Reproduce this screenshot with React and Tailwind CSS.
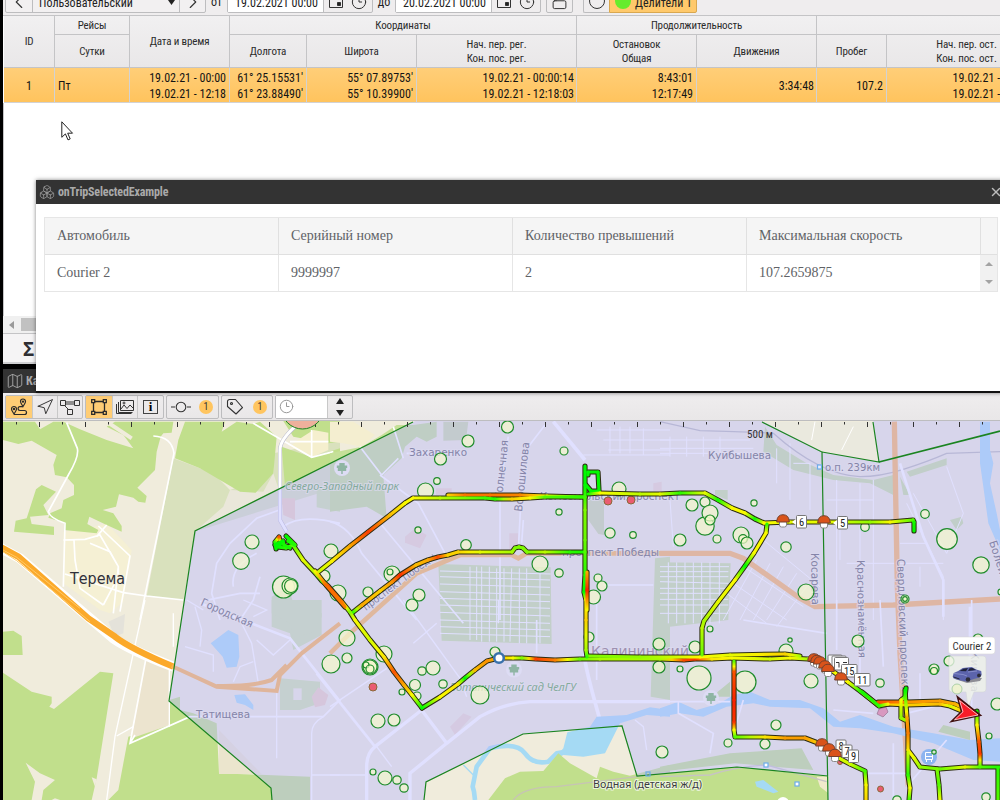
import React from "react";
import { ChevronLeft, ChevronRight, Clock3, Navigation, Map as MapIcon, Boxes, X, LockOpen } from "lucide-react";

function HeadCell({ className = "", children }) {
  return (
    <div className={`flex flex-col items-center justify-center border-b border-r border-[#c4c4c6] pt-[1px] text-center leading-[14px] ${className}`}>
      {children}
    </div>
  );
}

function Cell({ className = "items-end pr-[3px]", lines }) {
  return (
    <div className={`flex flex-col justify-center border-b border-r border-[#d2d2d4] pt-[2px] text-[12px] leading-[16px] text-[#141414] ${className}`}>
      {lines.map((l) => <div key={l} className="whitespace-nowrap">{l}</div>)}
    </div>
  );
}

function CalendarIcon() {
  return (
    <svg width="14" height="14" viewBox="0 0 14 14" fill="none" stroke="#333"><path d="M.5 0v13.5h13V0" /><path d="M8.500 8.500h3v3h-3z" fill="#222" /></svg>
  );
}

function DateField({ value }) {
  return (
    <div className="flex h-[22px] shrink-0 rounded-[2px] border border-[#bdbdbf]">
      <div className="w-[95px] bg-white pl-[7px] text-[12px] leading-[22px] text-[#222]"><span className="whitespace-nowrap">{value}</span></div>
      <div className="flex w-[49px] items-start justify-between border-l border-[#bdbdbf] px-[5px] pt-[2px]">
        <CalendarIcon />
        <Clock3 size={16} strokeWidth={1.500} color="#333" />
      </div>
    </div>
  );
}

function TopBar() {
  return (
    <div className="flex h-[16px] shrink-0 items-end border-b border-[#c4c4c6] bg-[#efedee] pb-[2px] pl-[2px] text-[13px] text-[#222]">
      <div className="flex h-[22px] w-[201px] shrink-0 rounded-[2px] border border-[#bdbdbf] bg-[#f2f0f1]">
        <div className="flex w-[27px] items-center justify-center border-r border-[#bdbdbf]"><ChevronLeft size={22} strokeWidth={1.200} color="#333" /></div>
        <div className="flex flex-1 justify-between pl-[6px] pr-[4px]">
          <span className="text-[12px] leading-[22px]">Пользовательский</span>
          <svg className="mt-[8px]" width="7" height="5"><path d="M0 0h7l-3.500 5z" fill="#222" /></svg>
        </div>
        <div className="flex w-[26px] items-center justify-center border-l border-[#bdbdbf]"><ChevronRight size={22} strokeWidth={1.200} color="#333" /></div>
      </div>
      <div className="flex h-[22px] w-[21px] shrink-0 justify-center text-[12px] leading-[22px]">от</div>
      <DateField value="19.02.2021 00:00" />
      <div className="flex h-[22px] w-[22px] shrink-0 justify-center text-[12px] leading-[22px]">до</div>
      <DateField value="20.02.2021 00:00" />
      <div className="ml-[5px] flex h-[22px] w-[27px] shrink-0 items-end justify-center rounded-[2px] border border-[#bdbdbf] pb-[2px]"><LockOpen size={17} strokeWidth={1.400} color="#333" /></div>
      <div className="ml-[10px] flex h-[22px] w-[26px] shrink-0 justify-center rounded-l-[2px] border border-r-0 border-[#bdbdbf]"><div className="mt-[1px] h-[16px] w-[16px] rounded-full border border-[#333]" /></div>
      <div className="flex h-[22px] w-[88px] shrink-0 rounded-r-[2px] border border-[#d9a850] bg-[#ffc96b] pl-[5px]">
        <div className="mt-[1px] h-[16px] w-[16px] shrink-0 rounded-full bg-[#66ec2c]" />
        <span className="ml-[4px] whitespace-nowrap text-[12px] leading-[22px]">Делители 1</span>
      </div>
    </div>
  );
}

function TripTable() {
  return (
    <div className="w-[1043px] shrink-0 pl-[1px] text-[#2b2b2b]">
      <div className="grid grid-cols-[51px_75px_100px_77px_110px_160px_120px_120px_70px_160px] grid-rows-[19px_33px] bg-gradient-to-b from-[#f1f0f1] to-[#e9e7e8] text-[11px] tracking-[-0.15px]">
        <HeadCell className="row-span-2">ID</HeadCell>
        <HeadCell>Рейсы</HeadCell>
        <HeadCell className="row-span-2">Дата и время</HeadCell>
        <HeadCell className="col-span-3">Координаты</HeadCell>
        <HeadCell className="col-span-2">Продолжительность</HeadCell>
        <HeadCell className="col-span-2" />
        <HeadCell>Сутки</HeadCell>
        <HeadCell>Долгота</HeadCell>
        <HeadCell>Широта</HeadCell>
        <HeadCell><div>Нач. пер. рег.</div><div>Кон. пос. рег.</div></HeadCell>
        <HeadCell><div>Остановок</div><div>Общая</div></HeadCell>
        <HeadCell>Движения</HeadCell>
        <HeadCell>Пробег</HeadCell>
        <HeadCell><div>Нач. пер. ост.</div><div>Кон. пос. ост.</div></HeadCell>
      </div>
      <div className="grid h-[35px] grid-cols-[51px_75px_100px_77px_110px_160px_120px_120px_70px_160px] bg-gradient-to-b from-[#ffce78] to-[#ffc35c]">
        <Cell className="items-center" lines={["1"]} />
        <Cell className="items-start pl-[3px]" lines={["Пт"]} />
        <Cell lines={["19.02.21 - 00:00", "19.02.21 - 12:18"]} />
        <Cell lines={["61° 25.15531'", "61° 23.88490'"]} />
        <Cell lines={["55° 07.89753'", "55° 10.39900'"]} />
        <Cell className="items-end pr-[2px]" lines={["19.02.21 - 00:00:14", "19.02.21 - 12:18:03"]} />
        <Cell lines={["8:43:01", "12:17:49"]} />
        <Cell className="items-end pr-[2px]" lines={["3:34:48"]} />
        <Cell lines={["107.2"]} />
        <Cell className="items-end pr-[2px]" lines={["19.02.21 - 00:09:27", "19.02.21 - 12:18:03"]} />
      </div>
    </div>
  );
}

function Popup() {
  const cols = ["Автомобиль", "Серийный номер", "Количество превышений", "Максимальная скорость"];
  const vals = ["Courier 2", "9999997", "2", "107.2659875"];
  return (
    <div className="absolute left-[36px] top-[180px] flex h-[213px] w-[980px] flex-col border-b-2 border-[#111] bg-white shadow-[0_0_4px_rgba(0,0,0,0.5)]">
      <div className="flex h-[24px] shrink-0 items-center bg-[#333] pl-[3px] text-[12px] font-bold tracking-[-0.15px] text-[#aaa]">
        <Boxes size={16} strokeWidth={1.200} color="#999" />
        <span className="ml-[3px]">onTripSelectedExample</span>
        <X className="ml-auto mr-[13px]" size={14} strokeWidth={2.400} color="#bbb" />
      </div>
      <div className="ml-[8px] mt-[13px] w-[954px] border border-[#e6e6e6] font-['Liberation_Serif',serif] text-[14px] text-[#606266]">
        <div className="grid h-[37px] grid-cols-[234px_234px_234px_234px_16px] border-b border-[#e0e0e0] bg-[#f5f5f5]">
          {cols.map((c) => <div key={c} className="flex items-center border-r border-[#e0e0e0] pb-[2px] pl-[12px]">{c}</div>)}
        </div>
        <div className="grid h-[36px] grid-cols-[234px_234px_234px_234px_16px]">
          {vals.map((c, i) => <div key={c} className={`flex items-center pb-[2px] pl-[12px] ${i < 3 ? "border-r border-[#e6e6e6]" : ""}`}>{c}</div>)}
          <div className="-ml-[1px] flex flex-col items-center justify-between bg-[#f1f1f1] py-[7px]">
            <svg width="8" height="4"><path d="M0 4h8L4 0z" fill="#a3a3a3" /></svg>
            <svg width="8" height="4"><path d="M0 0h8L4 4z" fill="#a3a3a3" /></svg>
          </div>
        </div>
      </div>
    </div>
  );
}

function ToolButton({ active, className = "", children }) {
  return <div className={`flex items-center justify-center ${active ? "bg-[#ffcd75]" : ""} ${className}`}>{children}</div>;
}

function Badge() {
  return <span className="flex h-[14px] w-[14px] items-center justify-center rounded-full bg-[#ffc55f] text-[10px] text-[#333]">1</span>;
}

function MapToolbar() {
  const group = "flex h-[24px] rounded-[2px] border border-[#bdbdbf]";
  return (
    <div className="flex h-[28px] shrink-0 items-center gap-[2px] border-b border-[#bdbdbf] bg-gradient-to-b from-[#efedee] to-[#e9e7e8] pl-[2px]">
      <div className={group}>
        <ToolButton active className="w-[26px]">
          <svg width="18" height="18" viewBox="0 0 18 18" fill="none" stroke="#2b2b2b" strokeWidth="1.200">
            <path d="M4 16C2.500 13.500 1.500 12.500 1.500 11a2.500 2.500 0 0 1 5 0c0 1.500-1 2.500-2.500 5zM13 8.500C11.500 6 10.500 5 10.500 3.500a2.500 2.500 0 0 1 5 0C15.500 5 14.500 6 13 8.500z" />
            <path d="M4 16.500h10.500a1.900 1.900 0 0 0 0-4H10a1.900 1.900 0 0 1 0-3.800h3" /><circle cx="4" cy="11" r=".6" /><circle cx="13" cy="3.600" r=".6" />
          </svg>
        </ToolButton>
        <ToolButton className="w-[25px] border-l border-[#c8c8c8]"><Navigation size={18} strokeWidth={1.300} color="#333" /></ToolButton>
        <ToolButton className="w-[25px] border-l border-[#c8c8c8]">
          <svg width="20" height="18" fill="none" stroke="#333"><path d="M.5 2.500h5v5h-5zM14.500 2.500h5v5h-5zM7.500 11.500h5v5h-5zM5.500 4h9M5.500 6h9M4.500 7.500l4 4" /></svg>
        </ToolButton>
      </div>
      <div className={group}>
        <ToolButton active className="w-[26px]">
          <svg width="16" height="16" fill="none" stroke="#2b2b2b"><path d="M2.500 4v8M13.500 4v8M4 2.500h8M4 13.500h8" strokeWidth="1.300" /><path d="M.7.7h3v3h-3zM12.300.7h3v3h-3zM.7 12.300h3v3h-3zM12.300 12.300h3v3h-3z" fill="#ffcd75" strokeWidth="1.300" /></svg>
        </ToolButton>
        <ToolButton className="w-[25px] border-l border-[#c8c8c8]">
          <svg width="18" height="14" fill="none" stroke="#333"><path d="M4.500.5h13v10h-13zM2.500 2v10.500h14M.5 4v9.500h15" /><path d="M5 9l3-4 3 3.500L14 5l3 3" /><circle cx="8" cy="3" r="1" /></svg>
        </ToolButton>
        <ToolButton className="w-[26px] border-l border-[#c8c8c8]"><span className="flex h-[14px] w-[15px] items-center justify-center border border-[#444] font-['Liberation_Serif',serif] text-[13px] font-bold leading-[12px]">i</span></ToolButton>
      </div>
      <div className={`${group} w-[53px] items-center justify-between pl-[4px] pr-[5px]`}>
        <svg width="20" height="12" fill="none" stroke="#333" strokeWidth="1.100"><circle cx="10" cy="6" r="4.800" /><path d="M0 6h4M16 6h4" /></svg><Badge />
      </div>
      <div className={`${group} w-[52px] items-center justify-between pl-[4px] pr-[5px]`}>
        <svg width="18" height="18" viewBox="0 0 18 18" fill="none" stroke="#333" strokeWidth="1.100"><path d="M1.500 3.500a2 2 0 0 1 2-2H9.500L16.500 9.500 10 16 1.500 8.500z" strokeLinejoin="round" /><circle cx="5.500" cy="5.500" r="1" /></svg><Badge />
      </div>
      <div className={`${group} w-[78px]`}>
        <div className="flex w-[51px] items-center bg-white pl-[3px]"><Clock3 size={15} strokeWidth={1.600} color="#999" /></div>
        <div className="flex flex-1 flex-col items-center justify-center gap-[6px] border-l border-[#c8c8c8]">
          <svg width="8" height="6"><path d="M0 6h8L4 0z" fill="#222" /></svg>
          <svg width="8" height="6"><path d="M0 0h8L4 6z" fill="#222" /></svg>
        </div>
      </div>
    </div>
  );
}

/* Each tile is drawn on a 1020 x 600 grid and shown at one third of it. */
function Tile({ x, y, children }) {
  return <g transform={`translate(${x} ${y}) scale(0.33333)`}>{children}</g>;
}

/* Track points: x, y, hue (120 = slow, 0 = fast). */
const tracks = [
  [[448, 495, 50], [465, 495, 28], [490, 495, 28], [520, 495, 32], [547, 496, 60], [585, 497, 100]],
  [[317, 573, 75], [332, 561, 58], [350, 546, 40], [368, 532, 15], [390, 515, 45], [405, 503, 60], [413, 498, 60], [440, 498, 75], [485, 498, 105], [495, 499, 110], [512, 499, 50], [530, 498, 60], [545, 497, 100], [585, 497, 110]],
  [[352, 613, 115], [362, 605, 40], [380, 591, 50], [392, 582, 35], [400, 575, 12], [416, 565, 45], [428, 560, 40], [438, 557, 18], [448, 555, 50], [458, 552, 50], [480, 552, 65], [512, 552, 80], [515, 548, 90], [519, 547, 90], [523, 548, 90], [527, 552, 90], [545, 552, 75], [570, 552, 110], [585, 552, 115]],
  [[276, 549, 120], [275, 542, 110], [279, 537, 20], [281, 544, 120], [277, 547, 120], [286, 548, 110], [293, 545, 100], [303, 560, 65], [317, 575, 80], [322, 581, 110], [328, 586, 20], [342, 602, 30], [350, 612, 90], [355, 620, 60], [370, 640, 70], [384, 657, 55], [394, 672, 20], [404, 685, 40], [412, 695, 60], [422, 708, 120]],
  [[275, 545, 120], [283, 541, 120], [284, 545, 115], [290, 548, 115]],
  [[286, 536, 120], [295, 545, 110], [288, 541, 115]],
  [[315, 571, 60], [326, 585, 25], [345, 607, 30]],
  [[422, 708, 120], [440, 697, 60], [458, 684, 55], [465, 678, 120], [475, 670, 45], [487, 661, 35], [499, 658, 45], [513, 658, 60], [522, 658, 90], [536, 659, 15], [555, 660, 30], [580, 659, 95], [600, 659, 80], [660, 659, 80], [684, 660, 18], [695, 659, 14], [712, 659, 55], [732, 658, 60], [770, 659, 70], [790, 658, 60], [808, 659, 80], [820, 662, 70], [838, 675, 60], [848, 682, 60], [860, 691, 110], [878, 705, 25], [888, 704, 50], [907, 705, 50], [940, 704, 45], [950, 706, 70], [962, 711, 45], [975, 712, 115]],
  [[588, 656, 90], [640, 657, 85], [700, 657, 60], [730, 655, 65], [785, 654, 50], [800, 656, 80]],
  [[878, 702, 20], [907, 702, 35], [940, 701, 38], [955, 704, 42], [968, 710, 60]],
  [[862, 692, 115], [879, 706, 110], [888, 704, 60]],
  [[585, 466, 120], [585, 485, 120], [585, 510, 90], [585, 540, 95], [585, 575, 110], [584, 592, 120], [586, 600, 60], [586, 620, 50], [586, 650, 80], [587, 657, 110]],
  [[587, 572, 40], [587, 590, 8], [587, 610, 60]],
  [[586, 485, 120], [591, 491, 120], [599, 491, 120], [598, 472, 120], [588, 472, 120], [588, 475, 120]],
  [[588, 494, 115], [600, 493, 60], [640, 494, 75], [660, 494, 65], [680, 493, 110], [705, 493, 65], [718, 500, 115], [732, 508, 60], [745, 513, 60], [755, 519, 115], [764, 523, 60], [790, 522, 65], [830, 522, 65], [870, 522, 85], [890, 522, 60], [913, 520, 100], [914, 522, 115], [914, 531, 120]],
  [[767, 524, 110], [766, 533, 60], [754, 553, 60], [745, 566, 120], [735, 580, 60], [718, 602, 65], [704, 621, 80], [702, 628, 75], [702, 655, 95]],
  [[734, 661, 100], [734, 672, 20], [734, 700, 8], [734, 722, 12], [734, 730, 60], [735, 737, 100], [765, 737, 55], [785, 738, 38], [805, 738, 38], [818, 743, 50], [835, 756, 70], [850, 764, 70], [865, 771, 105], [866, 785, 60], [866, 800, 50]],
  [[906, 688, 120], [905, 697, 115], [901, 700, 60], [901, 718, 85], [905, 720, 85]],
  [[905, 690, 120], [906, 705, 80], [907, 718, 40], [908, 733, 30], [908, 750, 55], [914, 758, 65], [920, 767, 85], [940, 769, 95], [965, 767, 65], [980, 767, 100], [1002, 767, 115]],
  [[908, 752, 70], [908, 775, 110], [910, 788, 60], [909, 801, 110]],
  [[977, 711, 120], [977, 725, 60], [979, 742, 20], [980, 754, 14], [980, 766, 100]],
  [[937, 769, 90], [939, 785, 100], [940, 801, 60]],
  [[998, 768, 110], [998, 801, 100]],
];

function Tracks() {
  const legs = [];
  tracks.forEach((t, i) => t.slice(1).forEach((b, k) => legs.push({ id: `leg${i}-${k}`, a: t[k], b })));
  return (
    <g fill="none" strokeLinecap="round" strokeLinejoin="round">
      <defs>
        {legs.map(({ id, a, b }) => (
          <linearGradient key={id} id={id} gradientUnits="userSpaceOnUse" x1={a[0]} y1={a[1]} x2={b[0]} y2={b[1]}>
            <stop offset="0" stopColor={`hsl(${a[2]} 100% 49%)`} />
            <stop offset=".5" stopColor={`hsl(${(a[2] + b[2]) / 2} 100% 49%)`} />
            <stop offset="1" stopColor={`hsl(${b[2]} 100% 49%)`} />
          </linearGradient>
        ))}
      </defs>
      {tracks.map((t, i) => (
        <polyline key={i} points={t.map((p) => `${p[0]},${p[1]}`).join(" ")} stroke="#2c2c10" strokeWidth="5.200" />
      ))}
      {legs.map(({ id, a, b }) => <path key={id} d={`M${a[0]} ${a[1]}L${b[0]} ${b[1]}`} stroke={`url(#${id})`} strokeWidth="3.200" />)}
    </g>
  );
}

const circles = [
  [252, 542, 7], [241, 561, 8.3], [283.5, 587, 11], [290, 586, 8], [291, 586, 6.5], [331, 551, 7], [324, 576, 6], [338, 593, 8],
  [468, 441, 6], [440.5, 459, 6], [507.5, 427, 6], [425.5, 491, 8], [437, 481, 3.3], [564, 451, 4], [619, 489, 7], [559, 512, 3.1], [610, 533, 5.1], [633, 535, 3.3], [418, 530, 3.1], [466, 545, 5.3], [392, 574, 8], [390, 572, 3], [368, 592, 5], [419, 595, 6], [412, 605, 6], [540, 564, 8], [559, 573, 4.2], [598, 578, 4], [602, 586, 5], [593.5, 597, 7],
  [692, 505, 6], [705, 502, 5], [705, 526, 9.2], [710, 513, 8], [710, 520, 5], [680, 540, 6], [717, 539, 4], [754, 503, 3.1], [741, 535, 8], [743, 539, 4.3], [747, 543, 6], [786, 547, 5.2], [865, 527, 4.3], [806, 592, 8], [925, 514, 4.3], [947, 539, 10.3], [981, 565, 8.2], [905, 599, 4], [905, 599, 2.300],
  [347, 638, 8], [331, 664, 9], [347, 658, 5], [370, 667, 8], [370, 667, 7], [366, 665, 3], [370, 669, 4], [384, 654, 8], [422, 671, 4.2], [433, 668, 7], [415, 685, 5.5], [402, 692, 3], [443, 684, 4.200], [480, 695, 9], [417, 696, 4], [378, 721, 7], [394, 720, 6], [373, 772, 3], [385, 778, 7], [397, 780, 4.200], [404, 788, 4.200], [495, 652, 5], [589, 637, 5], [659, 644, 6], [659, 667, 6], [662, 752, 6],
  [710, 629, 3], [790, 640, 2.200], [695, 647, 6], [786, 651, 7], [680, 669, 3], [699, 678, 12], [745, 682, 11], [811, 681, 7], [858, 641, 6], [880, 683, 4.200], [934, 669, 5], [934, 671, 3.500], [949, 661, 5], [776, 725, 5], [728, 743, 4], [765, 744, 5], [997, 704, 6], [989, 736, 3], [934, 752, 2.200], [897, 800, 4.200], [986, 797, 4.200], [978, 639, 5], [1001, 592, 3],
];
const alerts = [[608, 501, 4], [631, 500, 4], [373, 687, 4], [880.500, 789, 3], [840, 762, 2.500]];

function StreetName({ x, y, w, size = 11, rotate = 0, fill = "#8484a8", children, ...rest }) {
  return (
    <text x={x} y={y} textLength={w} lengthAdjust="spacingAndGlyphs" fontSize={size} fill={fill} transform={`rotate(${rotate} ${x} ${y})`} fontFamily="'DejaVu Sans', sans-serif" stroke="#dcdaf0" strokeWidth="2" strokeOpacity=".7" paintOrder="stroke" {...rest}>
      {children}
    </text>
  );
}

function Mushroom({ x, y }) {
  return (
    <g transform={`translate(${x} ${y})`}>
      <rect x="-3.500" y="-1" width="7" height="7" rx="2" fill="#fff" stroke="#888" />
      <path d="M-6.300 1Q-6-6.300 0-6.300T6.300 1z" fill="#d9531a" stroke="#74412c" />
    </g>
  );
}

function Flag({ x, y, w = 10, children }) {
  return (
    <g>
      <rect x={x} y={y} width={w} height="12.500" rx="1" fill="#fff" stroke="#777" />
      {children && <text x={x + w / 2} y={y + 10} fontSize="10.500" textAnchor="middle" fill="#222" fontFamily="Roboto, sans-serif">{children}</text>}
    </g>
  );
}

function Tree({ x, y }) {
  return (
    <g transform={`translate(${x} ${y})`}><circle r="8" fill="#dddcf4" /><path d="M-.7 6V3h-3.500V0h-1v-2.500h2.500V-5h5.400v2.500h2.500V0h-1v3H.7v3z" fill="#8fb5a4" /></g>
  );
}

function Land() {
  return (
    <g>
      <rect x="3" y="421" width="997" height="379" fill="#f0ecdc" />
      <Tile x={0} y={420}>
        <path d="M590 330L690 210 820 160V100L1020 60V200L600 330zM520 115L640 160 690 210 670 260 590 330 550 540 440 528z" fill="#d9e1bd" />
        <path d="M690 210L790 215 820 160 835 205 590 330 670 260z" fill="#eae7da" />
        <path d="M190 335L265 325 320 310 395 390 370 545 330 580 300 570 190 490z" fill="#f5f0d4" />
        <g fill="#c1df8c">
          <path d="M9 5H105L120 28 160 5H190L240 28 320 60 400 85 370 45 320 20 345 5H520L515 38 490 40 482 50 470 95 465 150 412 203 440 228 436 248 415 245 400 233 357 223 348 260 308 270 340 280 365 318V335L320 315 268 290 262 312 295 330 290 340 192 330V308L145 293 150 280 185 265 190 240 222 225V195L200 172 165 165 160 135 170 105 95 62 55 72 9 60z" />
          <path d="M125 195L168 215 130 255 145 285 90 290 95 312 162 320V345L42 335 47 302 80 295 108 208z" />
          <path d="M555 5H675L665 35 710 5 760 12 780 5 830 50 820 160 767 218 720 215 600 145 525 115 535 60z" />
          <path d="M848 0H1020V65L985 70 880 50zM845 80L935 112 1020 85V115L855 200z" />
        </g>
        <path d="M890 62L940 30 985 38V90L935 112 870 80z" fill="#f5efce" />
        <path d="M950 200L1020 200V275L950 262zM815 530L865 500 880 550 965 580V645L880 690 870 640 815 620z" fill="#cfe3ac" />
        <path d="M845 235L885 235V300L850 285z" fill="#edd2c2" />
        <path d="M320 5L395 55" fill="none" stroke="#f0ecdc" strokeWidth="12" />
        <g fill="none" stroke="#fff" strokeWidth="5">
          <path d="M200 8L232 85Q238 110 205 165L145 275Q150 295 195 310L190 500M460 48Q515 50 522 100L420 600M190 360L255 358 300 345 355 440V470L310 555M295 318L390 408 360 575M222 360L225 420 240 505 310 555M270 370L330 395 355 440 340 580M320 315L290 350 M195 462L370 518 440 528 550 540M760 10L935 112 1000 95M870 65H985M935 30V112" />
          <path d="M660 600L635 520 650 430 690 370 770 295 838 270M850 320Q900 280 1020 310M700 500Q690 440 770 400M780 470L760 540 720 600M600 545L720 520 780 520" />
        </g>
        <path d="M885 20Q840 60 840 90V300L860 335" fill="none" stroke="#b8b8cc" strokeWidth="12" />
        <path d="M885 20Q840 60 840 90V300L860 335" fill="none" stroke="#fff" strokeWidth="9" />
      </Tile>
      <Tile x={330} y={420}>
        <path d="M0 130V100L95 80 155 45 200 15H250L320 5V50L290 65 260 50 225 80 215 115 160 165 170 295 110 260 0 275z" fill="#c5e098" />
        <path d="M0 65L40 70 95 80 135 45 70 5H0z" fill="#f4eed0" />
        <path d="M340 5H415L408 60 340 62zM775 240L822 235V345L805 342 775 300z" fill="#cddbaa" />
        <path d="M225 350L255 325 290 345 270 385 225 368zM318 205L365 205V225H318zM538 340H565V390H538zM970 190L995 185V215H970z" fill="#edd8ca" />
        <path d="M325 432L662 442 665 672 335 662zM975 415L1020 410V840L962 830z" fill="#cbe2a0" />
        <g fill="none" stroke="#fff" strokeWidth="5">
          <path d="M90 80L155 165 205 115M190 20L220 115M150 165L265 250 345 400M155 315L400 610M0 305Q60 320 95 400L260 600M510 600V390L510 200 535 50M645 15L580 100 565 390M580 300L575 370 M230 100L400 100M620 600L620 700M800 540V780M820 495H970" />
          <path d="M330 453L662 462M330 470L660 480M330 492L660 502M330 515L660 525M330 535L660 545M330 555L660 565M330 577L660 588M330 600L660 610M330 620L660 630M330 640L660 650M420 440V660M440 440V660M455 440V665M478 440V665M500 445V665M522 445V665M545 445L540 665M568 445V670M590 445V670M630 445V670" strokeWidth="3" />
          <path d="M800 30H1020M820 60H1020M835 90H1020M840 20V100M870 20V100M900 20V100M940 25V105M760 105H1020" strokeWidth="3" />
        </g>
        <path d="M670 5L765 120M765 640V720Q770 760 810 900" fill="none" stroke="#fff" strokeWidth="11" />
        <path d="M0 700L60 640 260 460 390 405H545L565 415 590 400H1020" fill="none" stroke="#feb955" strokeWidth="14" />
      </Tile>
      <Tile x={660} y={420}>
        <path d="M0 427L212 430 205 600 30 620 0 620zM165 210H203V240L165 225z" fill="#cbe2a0" />
        <path d="M315 20L350 75 440 130 520 165 640 180 700 165V225L630 190 520 180 400 150 310 95zM740 155L860 115V135L750 170zM870 300L905 290 910 310 890 330zM720 170L750 225H730z" fill="#c8e0a0" />
        <path d="M305 5L485 97 658 128 638 5z" fill="#eae9de" />
        <g fill="none" stroke="#fff" strokeWidth="4">
          <path d="M390 70V240M400 130H450V270M350 85V190M530 180V600M600 190V600M640 180V600M560 430H850M740 250L850 470V600M760 220L860 400M720 370H800M860 140L910 280 860 400M780 440V500M500 240H640M935 560V800M540 330V420M290 420L190 600M330 430L240 600M370 440L280 600M410 460L320 600M440 500L350 620M250 440L430 560M220 490L380 600M200 520L320 610M310 360L480 500M30 240L40 380M465 5L455 60M580 20L545 90" strokeWidth="3" />
          <path d="M0 440L207 440M0 455H205M0 470H205M0 485L205 490M0 505H205M0 520H205M0 538H205M0 555H205M0 580H205M25 427V610M50 427V610M75 427V610M100 427V610M125 427V610M150 427V610M178 427V610" strokeWidth="3" />
          <path d="M0 60H270M0 85H280M0 100H290M30 50V110M80 50V110M130 50V110M180 50V110" strokeWidth="3" />
        </g>
        <path d="M0 5L120 32Q230 35 305 38L340 40Q480 165 600 170Q660 170 730 148T860 100L1020 95" fill="none" stroke="#b8b8b8" strokeWidth="4" />
        <path d="M960 5H990V90L1000 130 990 190 1010 280 1020 330V390L985 310 970 200 960 130z" fill="#a5daf4" />
        <path d="M703 5L712 500 720 700 745 1100M0 400H210L250 415 420 535 465 560 700 555 1020 537" fill="none" stroke="#fcb55f" strokeWidth="16" />
        <path d="M720 130L790 350 850 480V590M930 560V720" fill="none" stroke="#fff" strokeWidth="8" />
      </Tile>
      <Tile x={0} y={600}>
        <g fill="#c1df8c">
          <path d="M9 95L40 92 65 108 68 165H9zM9 218L95 275 155 290V310L148 320 162 327 300 215 340 220 290 535 275 600H190L180 600 165 595 155 600H9z" />
          <path d="M508 300L540 290V330L580 340 650 370 657 520 930 530V600H325L355 570 385 410 570 350 508 375z" />
          <path d="M840 235L960 245V310L900 330H840zM870 0H965V50L940 95 880 115 870 70 815 40V0z" fill="#cfe3ac" />
        </g>
        <path d="M77 488L120 520 165 540 130 570 125 600H95L105 545zM275 532L290 538 285 560z" fill="#f0ecdc" />
        <path d="M435 180L510 205V375L395 415z" fill="#ece4cf" />
        <path d="M657 390V522H785z" fill="#ebe5cd" />
        <path d="M325 65L375 42 370 100 345 110z" fill="#e4e2da" />
        <path d="M632 130L685 90 715 105 718 170 710 200 680 203 668 170zM703 285L735 283 760 315V330L735 315 710 308z" fill="#a5daf4" />
        <path d="M935 290L955 262 985 285 975 315 945 322z" fill="#edd2c2" />
        <path d="M880 265H905V300H880z" fill="#f0ecdc" />
        <g fill="none" stroke="#fff" strokeWidth="5">
          <path d="M435 0L345 410 320 600M350 408L400 380M508 205V380M830 280V475M970 350Q935 370 935 400V600M935 525H1020M520 40V140M610 30L560 0M555 140L640 165V215M585 20L605 90 600 140M720 60L755 130 775 250M770 120L820 165 870 120M700 245L720 200 760 185M730 0L800 30 760 50" strokeWidth="4" />
          <path d="M437 180L390 430 570 350H970L1020 300M393 425L405 405" strokeWidth="5" />
          <path d="M600 10L870 115 1020 305" strokeWidth="8" />
        </g>
        <path d="M-60 -200L9 -152 60 -125 340 115Q390 150 520 200" fill="none" stroke="#fff" strokeWidth="30" />
        <path d="M-60 -190L9 -155 55 -130 265 55 345 110Q390 145 520 200" fill="none" stroke="#fba92a" strokeWidth="19" />
        <path d="M515 198L650 260 830 273 840 225 905 160 1020 70M650 258Q760 260 815 240L860 195" fill="none" stroke="#feb350" strokeWidth="12" />
        <path d="M9 -150L50 -128 240 25M9 -145L50 -118 270 65" fill="none" stroke="#ffca66" strokeWidth="3" />
      </Tile>
      <Tile x={330} y={600}>
        <path d="M712 397L780 380 800 350 890 345 960 322 1020 330V350L950 345 870 370 840 430 825 460 760 470 700 465 670 480 700 445z" fill="#a5daf4" />
        <path d="M435 600L432 575 428 560 440 500 480 445Q560 425 585 460T655 485L680 460 710 455" fill="none" stroke="#a5daf4" strokeWidth="14" strokeLinejoin="round" />
        <path d="M400 495L430 525" fill="none" stroke="#a5daf4" strokeWidth="4" />
        <path d="M475 600L525 535 570 515 640 513 685 460 720 490 800 535 810 500 850 515 900 527 1020 495V600z" fill="#c1df8c" />
        <path d="M550 600Q580 560 680 560L920 530 1020 515" fill="none" stroke="#c7c3b5" strokeWidth="4" />
        <path d="M360 380L400 340 425 350 375 405z" fill="#ecd9cd" />
        <g fill="none" stroke="#fff" strokeWidth="10">
          <path d="M110 600V500Q110 460 135 440L275 330 350 430 240 520V600M350 430L450 350Q520 310 600 305H1020" />
          <path d="M-40 220L135 440" strokeWidth="8" />
          <path d="M220 0L390 235 410 290M250 130L320 70M0 320L170 205M140 440L185 500M0 525H105M505 0V70M915 360L940 380 950 450" strokeWidth="4" />
        </g>
      </Tile>
      <Tile x={660} y={600}>
        <path d="M0 325L55 305 110 330 180 310 220 285 270 275 330 300 420 300 490 325 540 365 600 345 700 380 820 400 930 420 1020 415V485L940 480 820 430 700 400 600 385 520 380 450 325 330 320 280 310 200 320 130 350 60 340 0 350z" fill="#a5daf4" />
        <path d="M0 520L225 500 505 530 504 600H0zM210 460L425 445 460 510 225 490 0 515V500zM155 290L210 245V290zM835 395L850 375 930 395V420z" fill="#c1df8c" />
        <path d="M470 530H505V580L480 560z" fill="#f1eacb" />
        <path d="M285 545L310 540 355 575 340 580 290 560z" fill="#a5daf4" />
        <g fill="none" stroke="#fff" strokeWidth="5">
          <path d="M0 305H210M55 305V340L160 400 150 460M250 60L500 100M530 0V150M600 0V250M660 0L670 200M740 340L900 300M935 0V350M780 220V320M860 420L740 560M620 520H740M700 430V600M520 330L640 340M250 300L220 400" />
        </g>
        <path d="M0 530L150 525Q230 500 320 495L500 545" fill="none" stroke="#c7c3c5" strokeWidth="4" />
      </Tile>
    </g>
  );
}

function ZoneLayer() {
  return (
    <g>
      <path d="M195 531L415 421H762L822 452 879 462 1001 431V801H828L829 776 737 767 637 776 622 726 523 734 426 782 424 801H272L271 788 169 701zM873 421L879 462 1001 431V421z" fill="rgb(182,183,255)" fillOpacity=".43" />
      <g fill="none" stroke="#1a8420" strokeWidth="1.200">
        <path d="M413 422L195 531 169 701 271 788 272 800M424 800L426 782 523 734 622 726 637 776 737 767 828 776M762 422L822 452 828 800M822 452L879 462 873 422" />
        <path d="M879 462L1000 431" strokeWidth="1.800" />
      </g>
    </g>
  );
}

function CityMap() {
  const ticks = Array.from({ length: 43 }, (_, i) => 16.5 + i * 23);
  return (
    <svg className="block shrink-0" width="997" height="379" viewBox="3 421 997 379">
      <Land />
      <ZoneLayer />
      <g stroke="#333">{ticks.map((t, i) => <path key={t} d={`M${t} 422V${i % 2 ? 427 : 424.5}`} />)}</g>
      <circle cx="302.500" cy="408" r="21" fill="#eeb09c" stroke="#1a8420" />
      <g fill="none" stroke="#6cacec" strokeWidth="1.200"><rect x="817.500" y="465" width="4" height="4" fill="#e8edfb" /><rect x="646" y="772" width="4" height="4" /><rect x="764" y="763" width="4" height="4" fill="#fff" /><rect x="795" y="782" width="4" height="4" fill="#fff" /></g>
      <Tree x={342} y={468} /><Tree x={514} y={669.500} /><Tree x={711} y={698} />
      <circle cx="929" cy="757" r="8" fill="#8cb4f0" /><path d="M925.500 752.500h7v7h-7zM925.500 756.500h7M926.500 760v2M931.500 760v2" fill="none" stroke="#fff" />
      <StreetName x={70} y={584} w={55} size={15} fill="#30303a" stroke="#f5f1dc">Терема</StreetName>
      <StreetName x={409} y={456} w={58}>Захаренко</StreetName>
      <StreetName x={708} y={459} w={63}>Куйбышева</StreetName>
      <StreetName x={825} y={471} w={55}>о.п. 239км</StreetName>
      <StreetName x={196} y={718} w={54}>Татищева</StreetName>
      <StreetName x={200} y={605} w={56} rotate={24}>Городская</StreetName>
      <StreetName x={285} y={490} w={114} fontStyle="italic" fill="#84ab9c" fontFamily="'Noto Sans', sans-serif">Северо-Западный парк</StreetName>
      <StreetName x={450} y={691} w={126} fontStyle="italic" fill="#84ab9c" fontFamily="'Noto Sans', sans-serif">Ботанический сад ЧелГУ</StreetName>
      <StreetName x={502} y={500} w={60} rotate={-84}>Солнечная</StreetName>
      <StreetName x={522} y={512} w={70} rotate={-84}>Ворошилова</StreetName>
      <StreetName x={540} y={500} w={140}>Комсомольский проспект</StreetName>
      <StreetName x={562} y={556} w={97}>проспект Победы</StreetName>
      <StreetName x={366} y={611} w={88} size={10} rotate={-37}>проспект Победы</StreetName>
      <StreetName x={591} y={656} w={98} size={13.500} fill="#9e90b0">Калининский</StreetName>
      <StreetName x={811} y={553} w={52} rotate={89}>Косарева</StreetName>
      <StreetName x={857} y={560} w={98} size={10.500} rotate={89}>Краснознамённая</StreetName>
      <StreetName x={897} y={559} w={132} rotate={88}>Свердловский проспект</StreetName>
      <StreetName x={989} y={542} w={48} rotate={72}>Болейко</StreetName>
      <StreetName x={971} y={652} w={40} rotate={90}>Кирова</StreetName>
      <StreetName x={593} y={788} w={109} size={11} fill="#3c3c40" stroke="#fff" fontFamily="'Noto Sans', sans-serif">Водная (детская ж/д)</StreetName>
      <g fill="#f4f8cc" fillOpacity=".72" stroke="#1f8c2c" strokeWidth="1.200">{circles.map(([x, y, r], i) => <circle key={i} cx={x} cy={y} r={r} />)}</g>
      <g fill="#ea5c70" stroke="#8a6a38" strokeWidth="1">{alerts.map(([x, y, r]) => <circle key={x} cx={x} cy={y} r={r} />)}</g>
      <path d="M879 709l7-2 2 5-5 5-6-3z" fill="#d898c0" stroke="#8a6a88" strokeWidth=".6" />
      <circle cx="783" cy="803" r="6" fill="#fff" />
      <Tracks />
      <circle cx="499" cy="658" r="4.800" fill="#fff" stroke="#3a72ac" strokeWidth="2.600" />
      <text x="747" y="438" fontSize="10.500" textLength="26" lengthAdjust="spacingAndGlyphs" fill="#333" fontFamily="Roboto, sans-serif">500 м</text>
      <path d="M792 522l4-3v6zM833 523l4-3v6z" fill="#fff" />
      <Mushroom x={783} y={521} /><Flag x={796.500} y={515.500}>6</Flag>
      <Mushroom x={824} y={522} /><Flag x={837.500} y={516.500}>5</Flag>
      <Flag x={828} y={655} w={14} /><Flag x={832} y={656} w={14} /><Flag x={834.500} y={657.500} w={14} /><path d="M836 662.500h3v5M843 662.500h4" fill="none" stroke="#333" />
      <Flag x={841.500} y={664.500} w={15.500}>15</Flag>
      <Mushroom x={814} y={660} /><Mushroom x={817} y={661.500} /><Mushroom x={820} y={663} /><Mushroom x={825} y={667} /><Mushroom x={828} y={670.500} /><Mushroom x={841} y={679} />
      <Flag x={854.500} y={673.500} w={15.500}>11</Flag>
      <Flag x={836} y={740}>8</Flag><Flag x={842} y={745}>7</Flag><Flag x={848.500} y={750}>9</Flag>
      <Mushroom x={822} y={745} /><Mushroom x={829} y={750} /><Mushroom x={835} y={755.500} />
      <path d="M949 659q0-3 3-3h31q3 0 3 3v30q0 3-3 3h-9l-6 16-2-16h-14q-3 0-3-3z" fill="#f0f4ea" fillOpacity=".8" stroke="#d3d6d8" strokeWidth=".6" />
      <circle cx="957" cy="689" r="5" fill="#eef2d0" stroke="#9cc89c" strokeWidth=".8" />
      <rect x="948.500" y="637" width="46.500" height="17" rx="3" fill="#fff" stroke="#d8d8d8" strokeWidth=".6" />
      <text x="952.500" y="650" fontSize="11.500" textLength="39" lengthAdjust="spacingAndGlyphs" fill="#333" fontFamily="Roboto, sans-serif">Courier 2</text>
      <path d="M955 679l12 4 13-2 2-3-10-1z" fill="#8d8d95" />
      <path d="M952.700 676.500l1-3.500 4.500-2 4.500-3 9-1 4.500 2.500 5 1.500.5 4-2 2.500-6 1.500-7 2.500-6-1-7-2z" fill="#5c64ac" />
      <path d="M959.500 671l4-2.300 4.500-.6-2 3.200zM968 671l1.500-2.800 3-.3 3.500 2z" fill="#20243c" /><path d="M954 673.500l9 1 4 1.500M968 672l9-1" fill="none" stroke="#8f96d0" strokeWidth=".8" />
      <circle cx="968" cy="679.500" r="2.300" fill="#2c2c38" /><circle cx="979" cy="675.500" r="1.900" fill="#2c2c38" /><path d="M953.500 677l6 2" stroke="#24263c" />
      <path d="M957.500 697L980.500 715.300 951.500 721.500 961.500 711.500z" fill="#f01420" stroke="#401010" strokeWidth="1.600" /><path d="M959.500 700.500l18.500 14.500-23.500 4.800 8.500-8z" fill="#f81c28" stroke="#fff" strokeWidth=".7" />
    </svg>
  );
}

export default function App() {
  return (
    <div className="relative flex h-[800px] w-[1000px] flex-col overflow-hidden bg-black pl-[3px] font-['Roboto_Condensed','Roboto',sans-serif] [font-stretch:75%]">
      <div className="flex h-[364px] shrink-0 flex-col overflow-hidden bg-white">
        <TopBar />
        <TripTable />
        <div className="flex-1 border-l border-[#c4c4c6]" />
        <div className="flex h-[18px] items-center border-b border-[#c4c4c6] bg-[#f0f0f0] pl-[6px]">
          <svg width="5" height="8"><path d="M5 0v8L0 4z" fill="#9a9a9a" /></svg>
          <div className="ml-[7px] h-[13px] w-[300px] bg-[#c1c1c1]" />
        </div>
        <div className="flex h-[30px] items-center border-b-2 border-[#cfcfd1] bg-[#f5f4f5] pl-[20px] pt-[2px] font-['Open_Sans',sans-serif] text-[19px] font-bold text-[#2f2f33] [font-stretch:100%]">Σ</div>
      </div>
      <div className="mt-[5px] flex h-[24px] shrink-0 items-center bg-[#333] pl-[3px] text-[12px] font-bold text-[#aaa]">
        <MapIcon size={18} strokeWidth={1.200} color="#aaa" /><span className="ml-[2px]">Карта</span>
      </div>
      <MapToolbar />
      <CityMap />
      <Popup />
      <svg className="absolute left-[61px] top-[121px]" width="13" height="20"><path d="M.8.800v15.500l3.600-3.400 2.600 6 2.200-1-2.500-5.700h4.800z" fill="#fff" stroke="#222" /></svg>
    </div>
  );
}
